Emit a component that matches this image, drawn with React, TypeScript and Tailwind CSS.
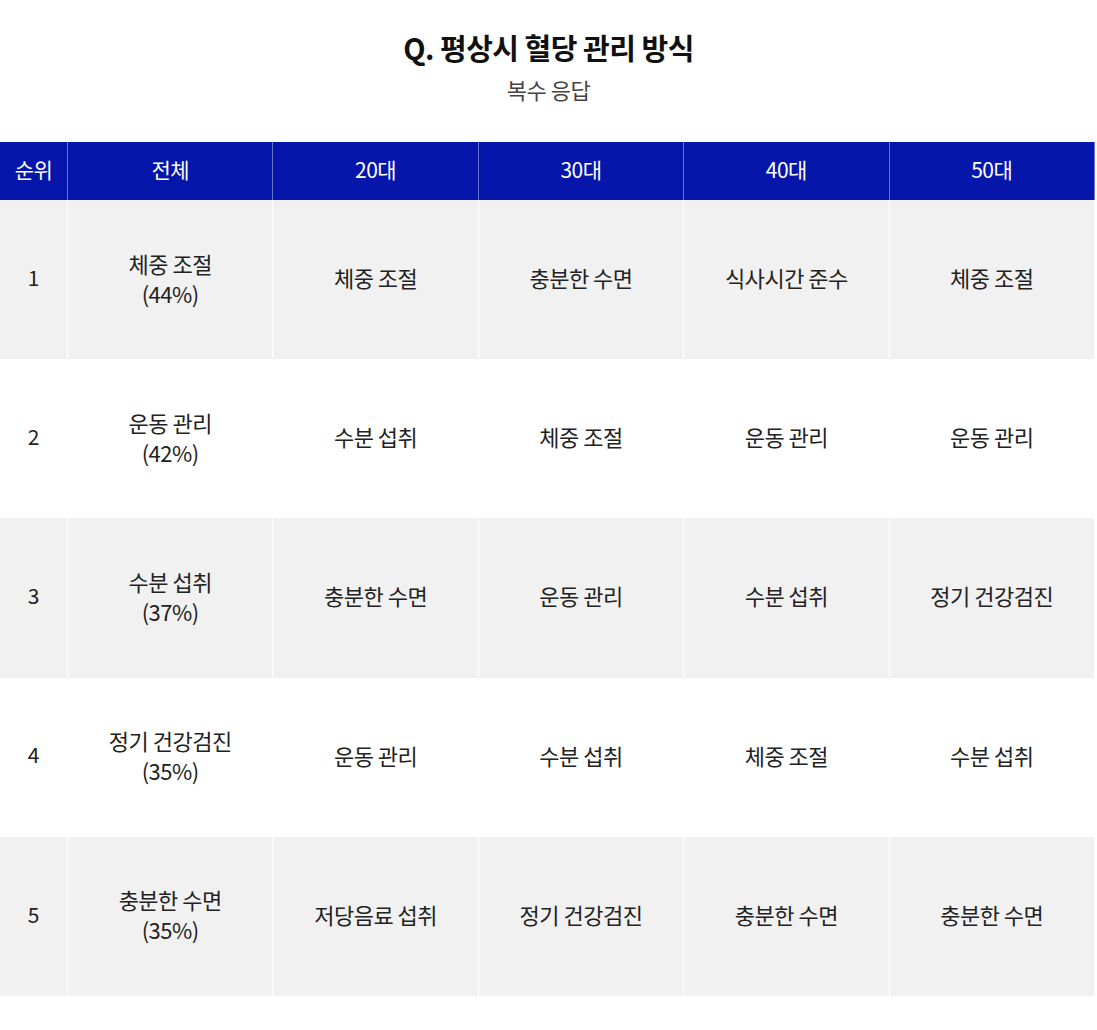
import React from 'react';

const font = { fontFamily: '"Noto Sans CJK KR", "Noto Sans", sans-serif' };

const headers = ['순위', '전체', '20대', '30대', '40대', '50대'];

const rows = [
  { rank: '1', total: '체중 조절', pct: '(44%)', ages: ['체중 조절', '충분한 수면', '식사시간 준수', '체중 조절'] },
  { rank: '2', total: '운동 관리', pct: '(42%)', ages: ['수분 섭취', '체중 조절', '운동 관리', '운동 관리'] },
  { rank: '3', total: '수분 섭취', pct: '(37%)', ages: ['충분한 수면', '운동 관리', '수분 섭취', '정기 건강검진'] },
  { rank: '4', total: '정기 건강검진', pct: '(35%)', ages: ['운동 관리', '수분 섭취', '체중 조절', '수분 섭취'] },
  { rank: '5', total: '충분한 수면', pct: '(35%)', ages: ['저당음료 섭취', '정기 건강검진', '충분한 수면', '충분한 수면'] },
];

export default function App() {
  return (
    <div className="w-[1097px] h-[1030px] bg-white" style={font}>
      {/* Title */}
      <div className="pt-[27px] flex flex-col items-center">
        <h1 className="text-[29px] font-bold text-[#111] leading-[40px] tracking-[-0.5px]">Q. 평상시 혈당 관리 방식</h1>
        <p className="mt-[7px] text-[22px] text-[#444] leading-[30px] tracking-[-0.5px]">복수 응답</p>
      </div>

      {/* Table */}
      <div className="mt-[38px] w-[1095px] grid grid-cols-[68px_repeat(5,1fr)]">
        {headers.map((h) => (
          <div
            key={h}
            className="h-[58px] pb-[3px] bg-[#0616ab] border-r border-[#6775d2] flex items-center justify-center text-white text-[21px] tracking-[-0.5px]"
          >
            {h}
          </div>
        ))}

        {rows.map((r, i) => {
          const bg = i % 2 === 0 ? 'bg-[#f1f1f1]' : 'bg-white';
          return (
            <React.Fragment key={r.rank}>
              <div className={`${bg} h-[159.2px] pb-[4px] border-r border-white flex items-center justify-center text-[21px] text-[#222]`}>
                {r.rank}
              </div>
              <div className={`${bg} h-[159.2px] pb-[4px] border-r border-white flex flex-col items-center justify-center text-[22px] text-[#222] leading-[30px] tracking-[-0.5px]`}>
                <span>{r.total}</span>
                <span>{r.pct}</span>
              </div>
              {r.ages.map((a, j) => (
                <div
                  key={j}
                  className={`${bg} h-[159.2px] pb-[4px] border-r border-white flex items-center justify-center text-[22px] text-[#222] tracking-[-0.5px]`}
                >
                  {a}
                </div>
              ))}
            </React.Fragment>
          );
        })}
      </div>
    </div>
  );
}
